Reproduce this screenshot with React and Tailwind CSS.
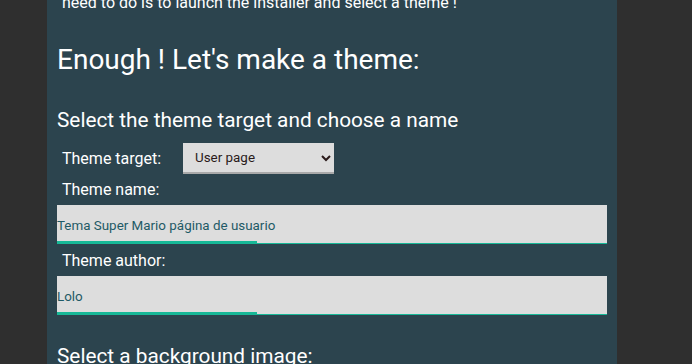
import React from 'react'

const Field = ({ value }) => (
  <div className="relative h-[39px] w-full bg-[#dddddd] border-b border-[#17b897]">
    <input
      readOnly
      value={value}
      className="h-full w-full bg-transparent pt-[2px] text-[13.4px] text-[#1f5a66] outline-none"
    />
    <span className="absolute left-0 bottom-[-1px] h-[3px] w-[200px] bg-[#17b897]" />
  </div>
)

export default function App() {
  return (
    <div className="h-[364px] overflow-hidden bg-[#2f2f2f] font-['Roboto',sans-serif] text-white">
      <div className="flow-root ml-[47px] w-[570px] h-full bg-[#2c444e] px-[10px]">
        <p className="mt-[-7px] pl-[5px] text-[16px] leading-[19px]">
          need to do is to launch the installer and select a theme !
        </p>

        <h1 className="mt-[32px] text-[28px] leading-[32px]">Enough ! Let's make a theme:</h1>

        <h2 className="mt-[32px] text-[20.8px] leading-[24px]">Select the theme target and choose a name</h2>

        <div className="mt-[11px] flex items-center pl-[5px]">
          <label className="w-[121px] text-[16px] leading-[19px]">Theme target:</label>
          <select
            defaultValue="user"
            className="h-[31px] w-[151px] bg-[#dddddd] border-0 border-b-2 border-[#a9a9a9] pl-[8px] text-[13.4px] text-[#2a1a1a] outline-none"
          >
            <option value="user">User page</option>
            <option value="home">Home page</option>
          </select>
        </div>

        <div className="mt-[6px] pl-[5px] text-[16px] leading-[19px]">Theme name:</div>
        <div className="mt-[6px]">
          <Field value="Tema Super Mario página de usuario" />
        </div>

        <div className="mt-[7px] pl-[5px] text-[16px] leading-[19px]">Theme author:</div>
        <div className="mt-[6px]">
          <Field value="Lolo" />
        </div>

        <h2 className="mt-[29px] text-[20.8px] leading-[24px]">Select a background image:</h2>
      </div>
    </div>
  )
}
